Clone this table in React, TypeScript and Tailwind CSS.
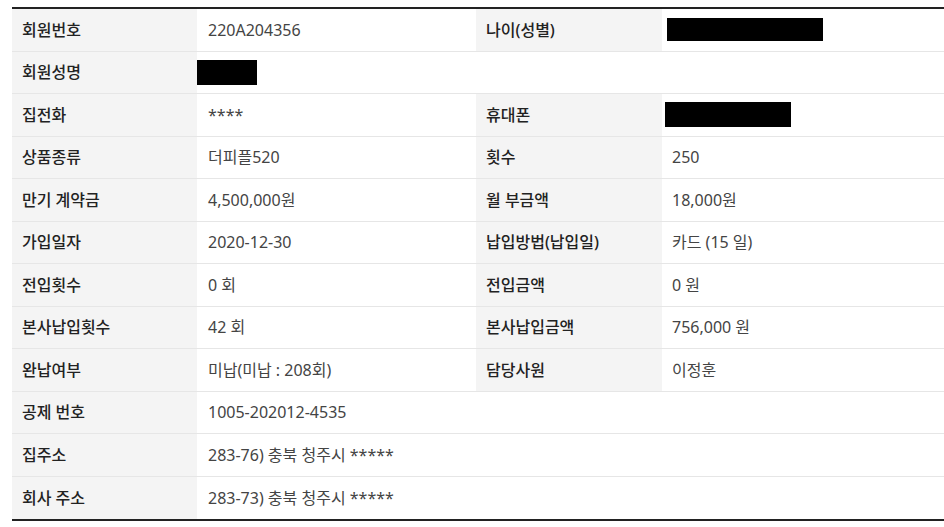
import React from "react";

type Cell = { label: string; value?: React.ReactNode };
type Row = [Cell] | [Cell, Cell];

const Black = ({ w, h }: { w: number; h: number }) => (
  <span className="block bg-black" style={{ width: w, height: h }} />
);

const rows: Row[] = [
  [
    { label: "회원번호", value: "220A204356" },
    { label: "나이(성별)", value: <span className="-ml-[5px] block"><Black w={156} h={23} /></span> },
  ],
  [{ label: "회원성명", value: <span className="-ml-[11px] block"><Black w={60} h={25} /></span> }],
  [
    { label: "집전화", value: "****" },
    { label: "휴대폰", value: <span className="-ml-[7px] block"><Black w={126} h={25} /></span> },
  ],
  [
    { label: "상품종류", value: "더피플520" },
    { label: "횟수", value: "250" },
  ],
  [
    { label: "만기 계약금", value: "4,500,000원" },
    { label: "월 부금액", value: "18,000원" },
  ],
  [
    { label: "가입일자", value: "2020-12-30" },
    { label: "납입방법(납입일)", value: "카드 (15 일)" },
  ],
  [
    { label: "전입횟수", value: "0 회" },
    { label: "전입금액", value: "0 원" },
  ],
  [
    { label: "본사납입횟수", value: "42 회" },
    { label: "본사납입금액", value: "756,000 원" },
  ],
  [
    { label: "완납여부", value: "미납(미납 : 208회)" },
    { label: "담당사원", value: "이정훈" },
  ],
  [{ label: "공제 번호", value: "1005-202012-4535" }],
  [{ label: "집주소", value: "283-76) 충북 청주시 *****" }],
  [{ label: "회사 주소", value: "283-73) 충북 청주시 *****" }],
];

export default function App() {
  return (
    <div
      className="w-[944px] h-[527px] bg-white pt-[7px] pl-[12px]"
      style={{ fontFamily: '"Noto Sans", "Noto Sans CJK KR", sans-serif' }}
    >
      <div className="border-t-2 border-b-2 border-[#222222]">
        {rows.map((row, i) => (
          <div
            key={i}
            className={
              "flex h-[42.5px] text-[16px] " +
              (i < rows.length - 1 ? "border-b border-[#e6e6e6]" : "")
            }
          >
            <div className="w-[185px] shrink-0 bg-[#f4f4f4] flex items-center pl-[10px] font-medium text-[#222222]">
              {row[0].label}
            </div>
            <div
              className={
                "flex items-center pl-[11px] text-[#444444] " +
                (row.length === 2 ? "w-[279px] shrink-0" : "flex-1")
              }
            >
              {row[0].value}
            </div>
            {row.length === 2 && (
              <>
                <div className="w-[186px] shrink-0 bg-[#f4f4f4] flex items-center pl-[10px] font-medium text-[#222222]">
                  {row[1].label}
                </div>
                <div className="flex-1 flex items-center pl-[10px] text-[#444444]">
                  {row[1].value}
                </div>
              </>
            )}
          </div>
        ))}
      </div>
    </div>
  );
}
